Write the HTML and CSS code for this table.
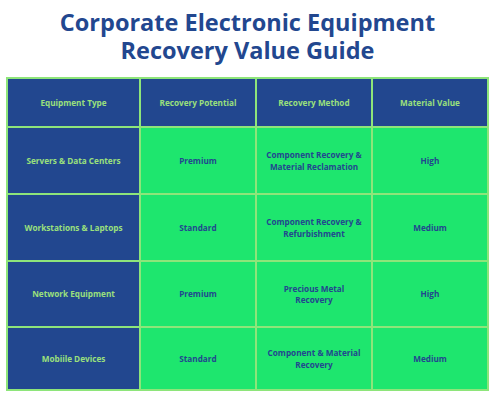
FILE: index.html
```html
<!DOCTYPE html>
<html lang="en">
<head>
  <meta charset="UTF-8">
  <meta name="viewport" content="width=device-width, initial-scale=1.0">
  <title>Corporate Electronic Equipment Recovery Value Guide</title>
  <link rel="stylesheet" href="styles.css">
</head>
<body>
  <!-- Title -->
  <h1 class="title">Corporate Electronic Equipment<br>Recovery Value Guide</h1>

  <!-- Value table -->
  <table class="guide">
    <tr class="head">
      <th class="col-type">Equipment Type</th>
      <th>Recovery Potential</th>
      <th>Recovery Method</th>
      <th>Material Value</th>
    </tr>
    <tr class="r1">
      <td class="type">Servers &amp; Data Centers</td>
      <td>Premium</td>
      <td>Component Recovery &amp;<br>Material Reclamation</td>
      <td>High</td>
    </tr>
    <tr class="r2">
      <td class="type">Workstations &amp; Laptops</td>
      <td>Standard</td>
      <td>Component Recovery &amp;<br>Refurbishment</td>
      <td>Medium</td>
    </tr>
    <tr class="r3">
      <td class="type">Network Equipment</td>
      <td>Premium</td>
      <td>Precious Metal<br>Recovery</td>
      <td>High</td>
    </tr>
    <tr class="r4">
      <td class="type">Mobiile Devices</td>
      <td>Standard</td>
      <td>Component &amp; Material<br>Recovery</td>
      <td>Medium</td>
    </tr>
  </table>
</body>
</html>
```

FILE: styles.css
```css
body {
  margin: 0;
  padding: 0;
  background-color: #ffffff;
  font-family: "Open Sans", Arial, sans-serif;
}

.title {
  margin: 8px 0 0 0;
  color: #22478f;
  font-size: 23.5px;
  line-height: 28px;
  font-weight: 700;
  text-align: center;
}

.guide {
  margin: 13px 0 0 6px;
  width: 483px;
  border-collapse: collapse;
  table-layout: fixed;
}

.guide th,
.guide td {
  border: 2px solid #8ee57a;
  padding: 0;
  text-align: center;
  vertical-align: middle;
  font-size: 8.2px;
  line-height: 11.5px;
  font-weight: 700;
}

.guide th {
  background-color: #22478f;
  color: #9be07c;
}

.guide td {
  background-color: #1ee66e;
  color: #22478f;
}

.guide td.type {
  background-color: #22478f;
  color: #9be07c;
}

.col-type {
  width: 131px;
}

.head { height: 49px; }
.r1 { height: 67px; }
.r2 { height: 67px; }
.r3 { height: 66px; }
.r4 { height: 63px; }
```
